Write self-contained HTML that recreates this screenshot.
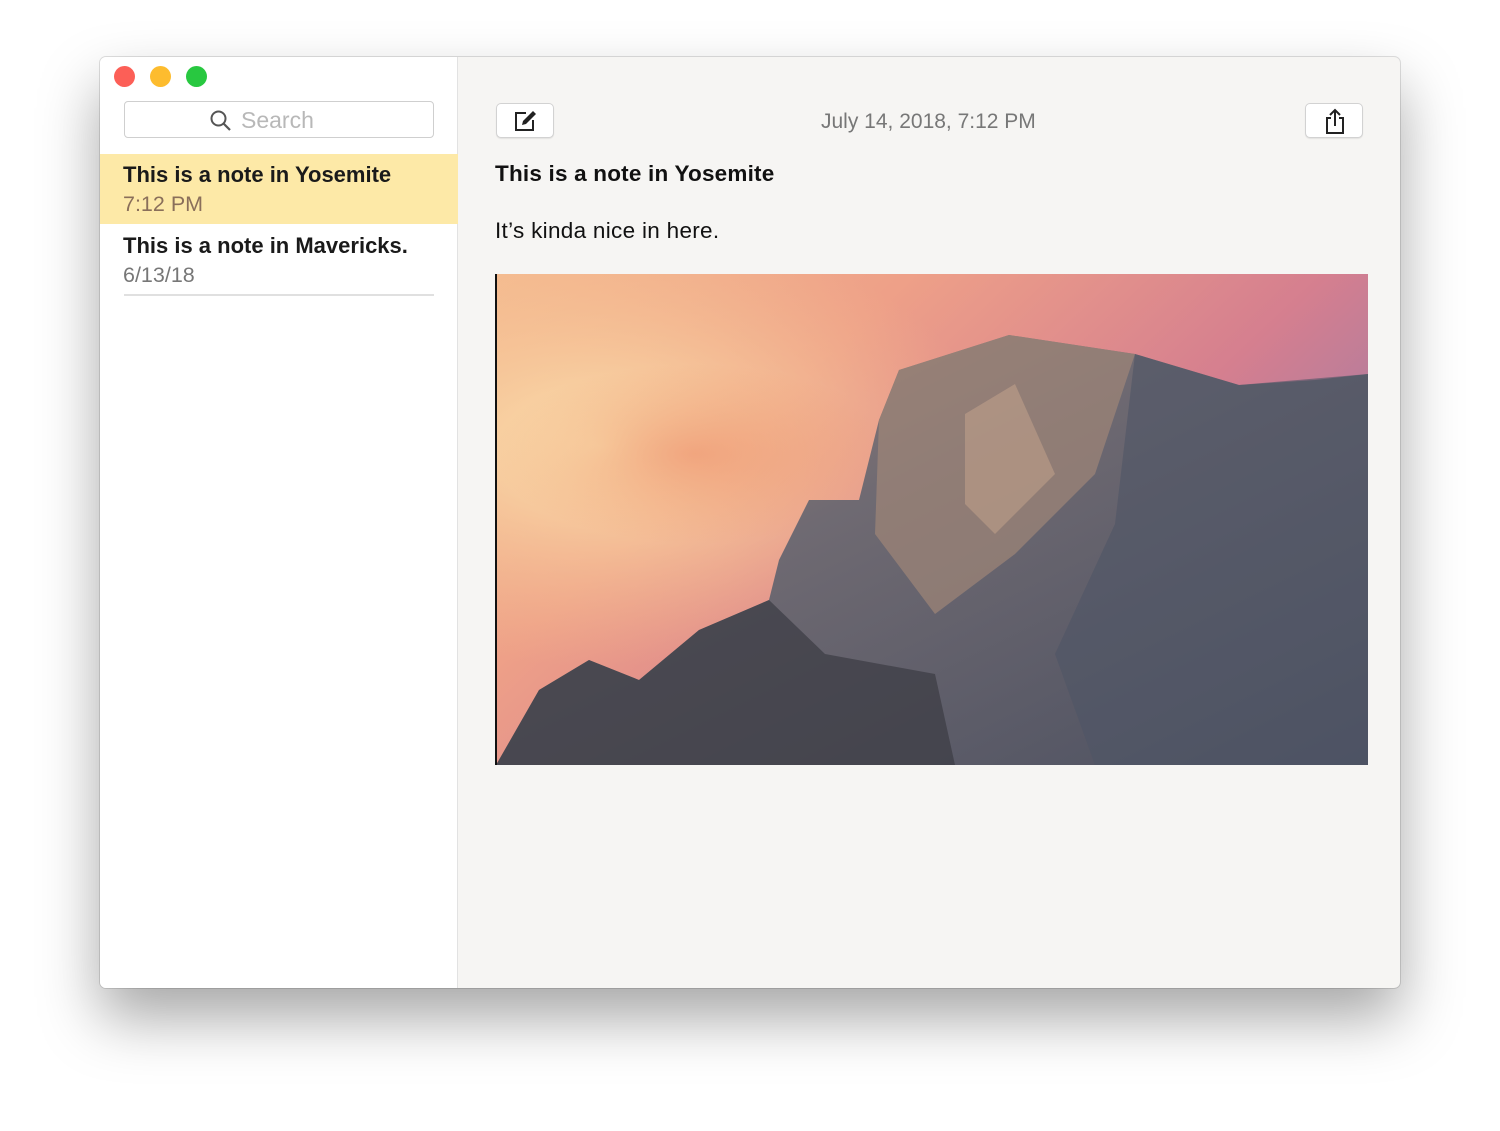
<!DOCTYPE html>
<html><head><meta charset="utf-8"><style>
*{margin:0;padding:0;box-sizing:border-box}
body{width:1500px;height:1131px;background:#fff;position:relative;overflow:hidden;font-family:"Liberation Sans",sans-serif}
.win{position:absolute;left:100px;top:57px;width:1300px;height:931px;border-radius:6px;overflow:hidden;background:#f6f5f3;box-shadow:0 30px 60px rgba(0,0,0,.35),0 0 0 1px rgba(0,0,0,.12)}
.side{position:absolute;left:0;top:0;width:358px;height:100%;background:#fff;border-right:1px solid #e2e2e2}
.dot{position:absolute;top:9px;width:21px;height:21px;border-radius:50%}
.search{position:absolute;left:24px;top:44px;width:310px;height:37px;border:1px solid #cfcfcf;border-radius:4px;background:#fff}
.search span{position:absolute;left:116px;top:5px;font-size:23px;color:#b8b8b8}
.note{position:absolute;left:0;width:358px;padding-left:23px}
.t{font-weight:bold;font-size:22px;color:#1a1a1a}
.d{font-size:21.5px;color:#777}
.btn{position:absolute;top:46px;width:58px;height:35px;border:1px solid #d2d2d2;border-radius:5px;background:#fff;box-shadow:0 1px 1px rgba(0,0,0,.08)}
</style></head><body>
<div class="win">
<div class="side">
<div class="dot" style="left:14px;background:#fc5f57"></div>
<div class="dot" style="left:50px;background:#fdbc2e"></div>
<div class="dot" style="left:86px;background:#28c840"></div>
<div class="search"><svg style="position:absolute;left:84px;top:7px" width="24" height="24" viewBox="0 0 24 24"><circle cx="9.5" cy="9.5" r="7" fill="none" stroke="#555" stroke-width="2"/><path d="M14.5 14.5L21 21" stroke="#555" stroke-width="2.2"/></svg><span>Search</span></div>
<div class="note" style="top:97px;height:70px;background:#fde9a7;padding-top:8px"><div class="t">This is a note in Yosemite</div><div class="d" style="color:#8a6f5a;margin-top:4px">7:12 PM</div></div>
<div class="note" style="top:176px"><div class="t">This is a note in Mavericks.</div><div class="d" style="margin-top:4px">6/13/18</div></div>
<div style="position:absolute;left:24px;top:237px;width:310px;height:2px;background:#e0e0e0"></div>
</div>
<div class="btn" style="left:396px"><svg style="position:absolute;left:16px;top:4px" width="26" height="26" viewBox="0 0 26 26"><path d="M13 5H3v17h17V12" fill="none" stroke="#222" stroke-width="2"/><path d="M9 17l1-4 10-10 3 3-10 10z" fill="#222"/></svg></div>
<div style="position:absolute;left:721px;top:53px;font-size:21px;color:#777">July 14, 2018, 7:12 PM</div>
<div class="btn" style="left:1205px"><svg style="position:absolute;left:17px;top:3px" width="24" height="28" viewBox="0 0 24 28"><path d="M8 11H4v15h16V11h-4" fill="none" stroke="#222" stroke-width="2"/><path d="M12 19V3M7 8l5-5 5 5" fill="none" stroke="#222" stroke-width="2"/></svg></div>
<div style="position:absolute;left:395px;top:104px;font-size:22.5px;font-weight:bold;color:#111;letter-spacing:.2px">This is a note in Yosemite</div>
<div style="position:absolute;left:395px;top:161px;font-size:22.5px;color:#111;letter-spacing:.3px">It’s kinda nice in here.</div>
<svg style="position:absolute;left:395px;top:217px" width="873" height="491" viewBox="0 0 873 491">
<defs>
<linearGradient id="sky" x1="0" y1="0" x2="1" y2="0.6"><stop offset="0" stop-color="#f4b98f"/><stop offset="0.35" stop-color="#eea088"/><stop offset="0.7" stop-color="#d57f8f"/><stop offset="1" stop-color="#9a7aa7"/></linearGradient>
<radialGradient id="glow" cx="0.12" cy="0.35" r="0.45"><stop offset="0" stop-color="#fbe3b0"/><stop offset="1" stop-color="#f6c18f" stop-opacity="0"/></radialGradient>
<radialGradient id="cl" cx="0.5" cy="0.5" r="0.5"><stop offset="0" stop-color="#ee9470" stop-opacity=".7"/><stop offset="1" stop-color="#ee9470" stop-opacity="0"/></radialGradient>
<linearGradient id="rock" x1="0" y1="0" x2="1" y2="1"><stop offset="0" stop-color="#a58478"/><stop offset="0.4" stop-color="#6f6a72"/><stop offset="1" stop-color="#4c5060"/></linearGradient>
</defs>
<rect width="873" height="491" fill="url(#sky)"/>
<rect width="873" height="491" fill="url(#glow)"/>
<ellipse cx="200" cy="180" rx="200" ry="90" fill="url(#cl)"/>
<polygon points="1,491 4,486 44,416 94,386 144,406 204,356 274,326 284,286 314,226 364,226 384,146 404,96 514,61 640,80 744,111 820,106 873,100 873,491" fill="url(#rock)"/>
<polygon points="404,96 514,61 640,80 600,200 520,280 440,340 380,260 384,146" fill="#a08677" opacity=".7"/>
<polygon points="470,140 520,110 560,200 500,260 470,230" fill="#c8a58e" opacity=".5"/>
<polygon points="640,80 744,111 873,100 873,491 600,491 560,380 620,250" fill="#4e5566" opacity=".6"/>
<polygon points="1,491 44,416 94,386 144,406 204,356 274,326 330,380 440,400 460,491" fill="#3d3d45" opacity=".75"/>
<rect x="0" y="0" width="2" height="491" fill="#111"/>
</svg>
</div>
</body></html>
